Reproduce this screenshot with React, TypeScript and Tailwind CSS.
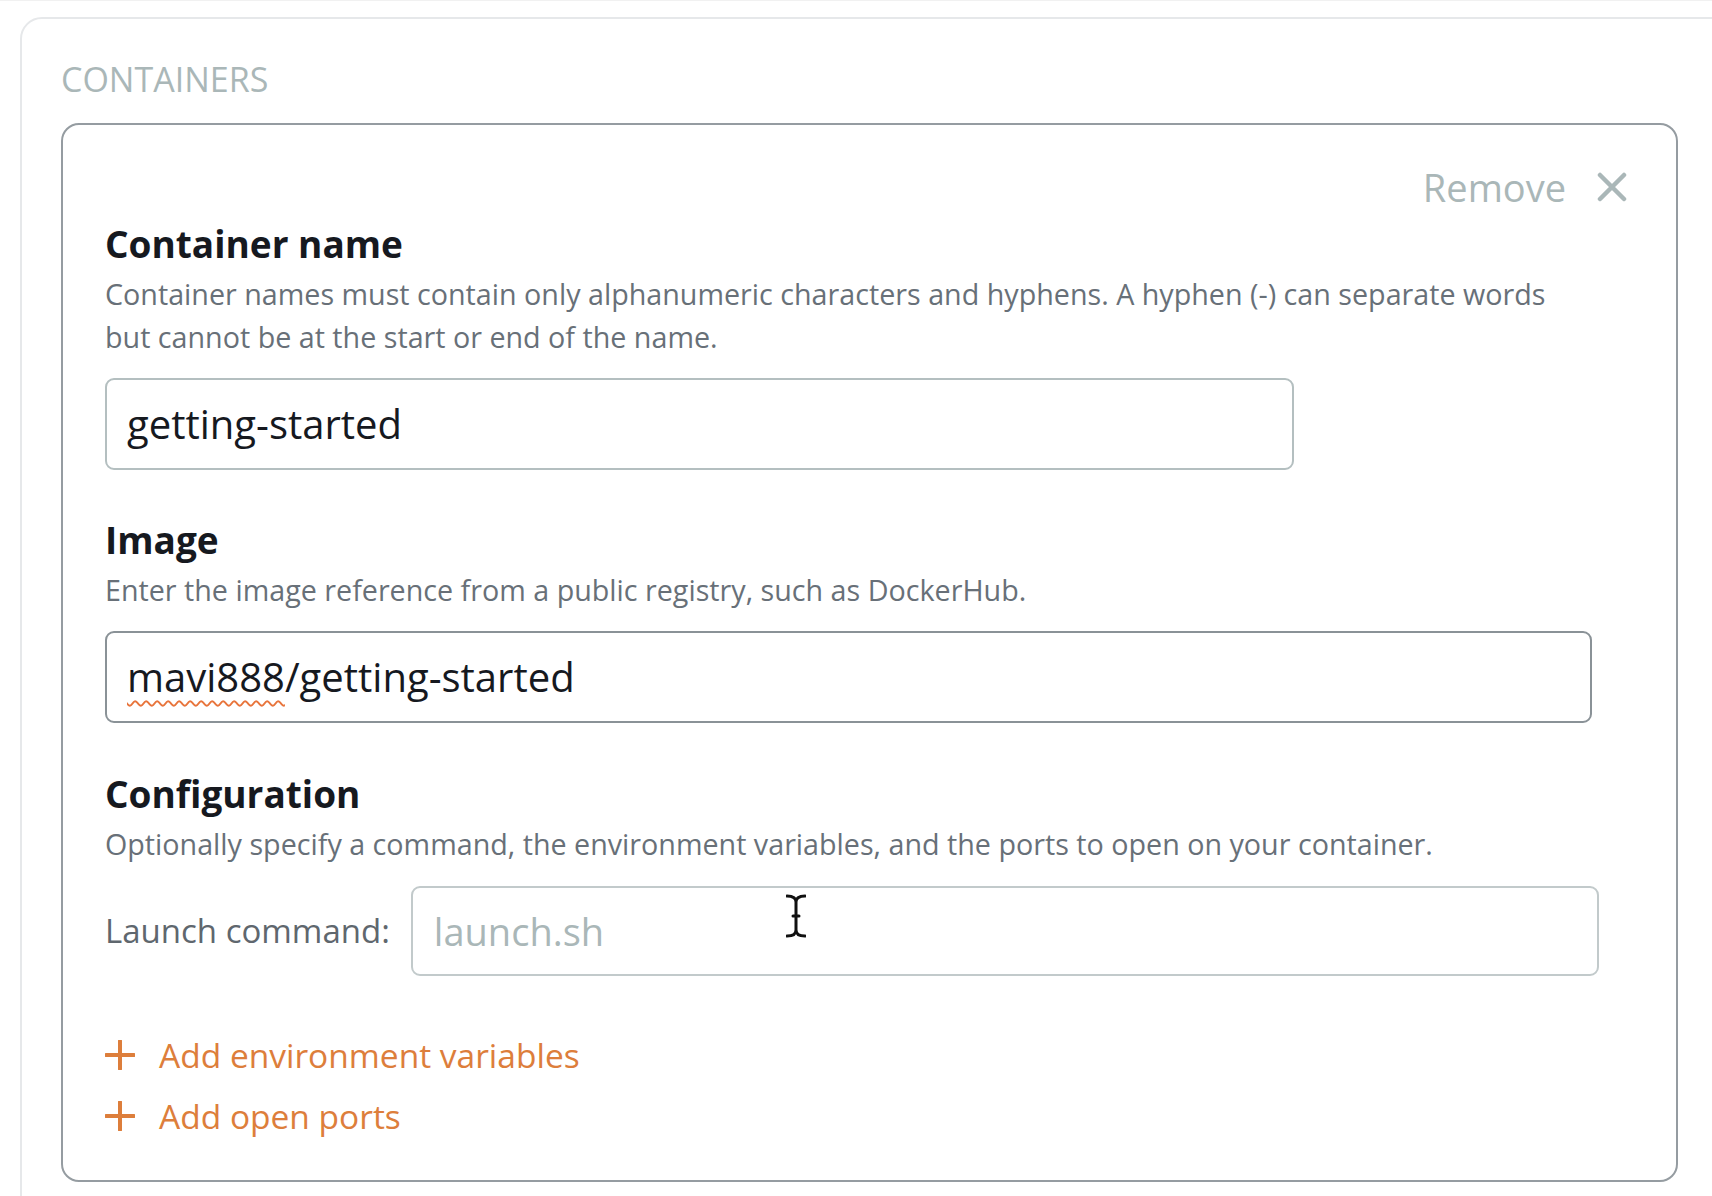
import React from 'react'

const font = { fontFamily: '"Open Sans", "Noto Sans", Arial, sans-serif' }

function PlusIcon() {
  return (
    <svg width="30" height="30" viewBox="0 0 30 30" className="shrink-0">
      <path d="M15 1v28M1 15h28" stroke="#dd7e3b" strokeWidth="4" strokeLinecap="round" />
    </svg>
  )
}

function TextCursor() {
  return (
    <svg width="20" height="44" viewBox="0 0 20 44" className="absolute left-[373px] top-[6px]">
      <path
        d="M1 2c4 0 9 1 9 6v28c0 5-5 6-9 6M19 2c-4 0-9 1-9 6v28c0 5 5 6 9 6M7 22h6"
        stroke="#111"
        strokeWidth="3"
        fill="none"
        strokeLinecap="round"
      />
    </svg>
  )
}

function Field({ title, help, children }: { title: string; help: React.ReactNode; children: React.ReactNode }) {
  return (
    <div>
      <h3 className="text-[37px] leading-[40px] font-bold text-[#16191f]">{title}</h3>
      <p className="mt-[8px] text-[28.7px] leading-[43px] text-[#687078]">{help}</p>
      {children}
    </div>
  )
}

export default function App() {
  return (
    <div className="h-[1196px] w-full overflow-hidden bg-white border-t border-[#f1f1f1]" style={font}>
      <div className="ml-[20px] mt-[16px] w-[1760px] h-[1300px] rounded-tl-[22px] border-2 border-[#e6e8ea] pl-[39px] pt-[40px]">
        <div className="text-[34px] leading-[40px] text-[#aab7b8] uppercase">Containers</div>

        <div className="mt-[24px] w-[1617px] rounded-[18px] border-2 border-[#959ca1] pl-[42px] pr-[49px] pt-[42px] pb-[44px]">
          <div className="flex justify-end items-center h-[40px]">
            <button className="flex items-center gap-[31px] text-[38px] leading-[40px] text-[#aab7b8]">
              Remove
              <svg width="30" height="30" viewBox="0 0 30 30">
                <path d="M3 3l24 24M27 3L3 27" stroke="#aab7b8" strokeWidth="4.5" strokeLinecap="round" />
              </svg>
            </button>
          </div>

          <div className="mt-[17px]">
            <Field
              title="Container name"
              help={
                <>
                  Container names must contain only alphanumeric characters and hyphens. A hyphen (-) can separate words
                  <br />
                  but cannot be at the start or end of the name.
                </>
              }
            >
              <div className="mt-[20px] w-[1189px] h-[92px] rounded-[9px] border-2 border-[#b4bfc0] pl-[20px] flex items-center text-[40px] text-[#16191f]">
                getting-started
              </div>
            </Field>
          </div>

          <div className="mt-[50px]">
            <Field title="Image" help="Enter the image reference from a public registry, such as DockerHub.">
              <div className="mt-[20px] w-[1487px] h-[92px] rounded-[9px] border-2 border-[#8a9297] pl-[20px] flex items-center text-[40px] text-[#16191f]">
                <span className="underline decoration-wavy decoration-[#e8743b] decoration-2 underline-offset-[8px]">mavi888</span>
                /getting-started
              </div>
            </Field>
          </div>

          <div className="mt-[51px]">
            <Field
              title="Configuration"
              help="Optionally specify a command, the environment variables, and the ports to open on your container."
            >
              <div className="mt-[21px] flex items-center gap-[21px]">
                <span className="text-[33px] text-[#5f676e]">Launch command:</span>
                <div className="relative w-[1188px] h-[90px] rounded-[9px] border-2 border-[#c2cacb] pl-[21px] flex items-center text-[38px] text-[#aab7b8]">
                  launch.sh
                  <TextCursor />
                </div>
              </div>
            </Field>
          </div>

          <div className="mt-[59px] flex flex-col gap-[21px] text-[33.5px] leading-[40px] text-[#dd7e3b]">
            <a className="flex items-center gap-[24px]">
              <PlusIcon />
              Add environment variables
            </a>
            <a className="flex items-center gap-[24px]">
              <PlusIcon />
              Add open ports
            </a>
          </div>
        </div>
      </div>
    </div>
  )
}
